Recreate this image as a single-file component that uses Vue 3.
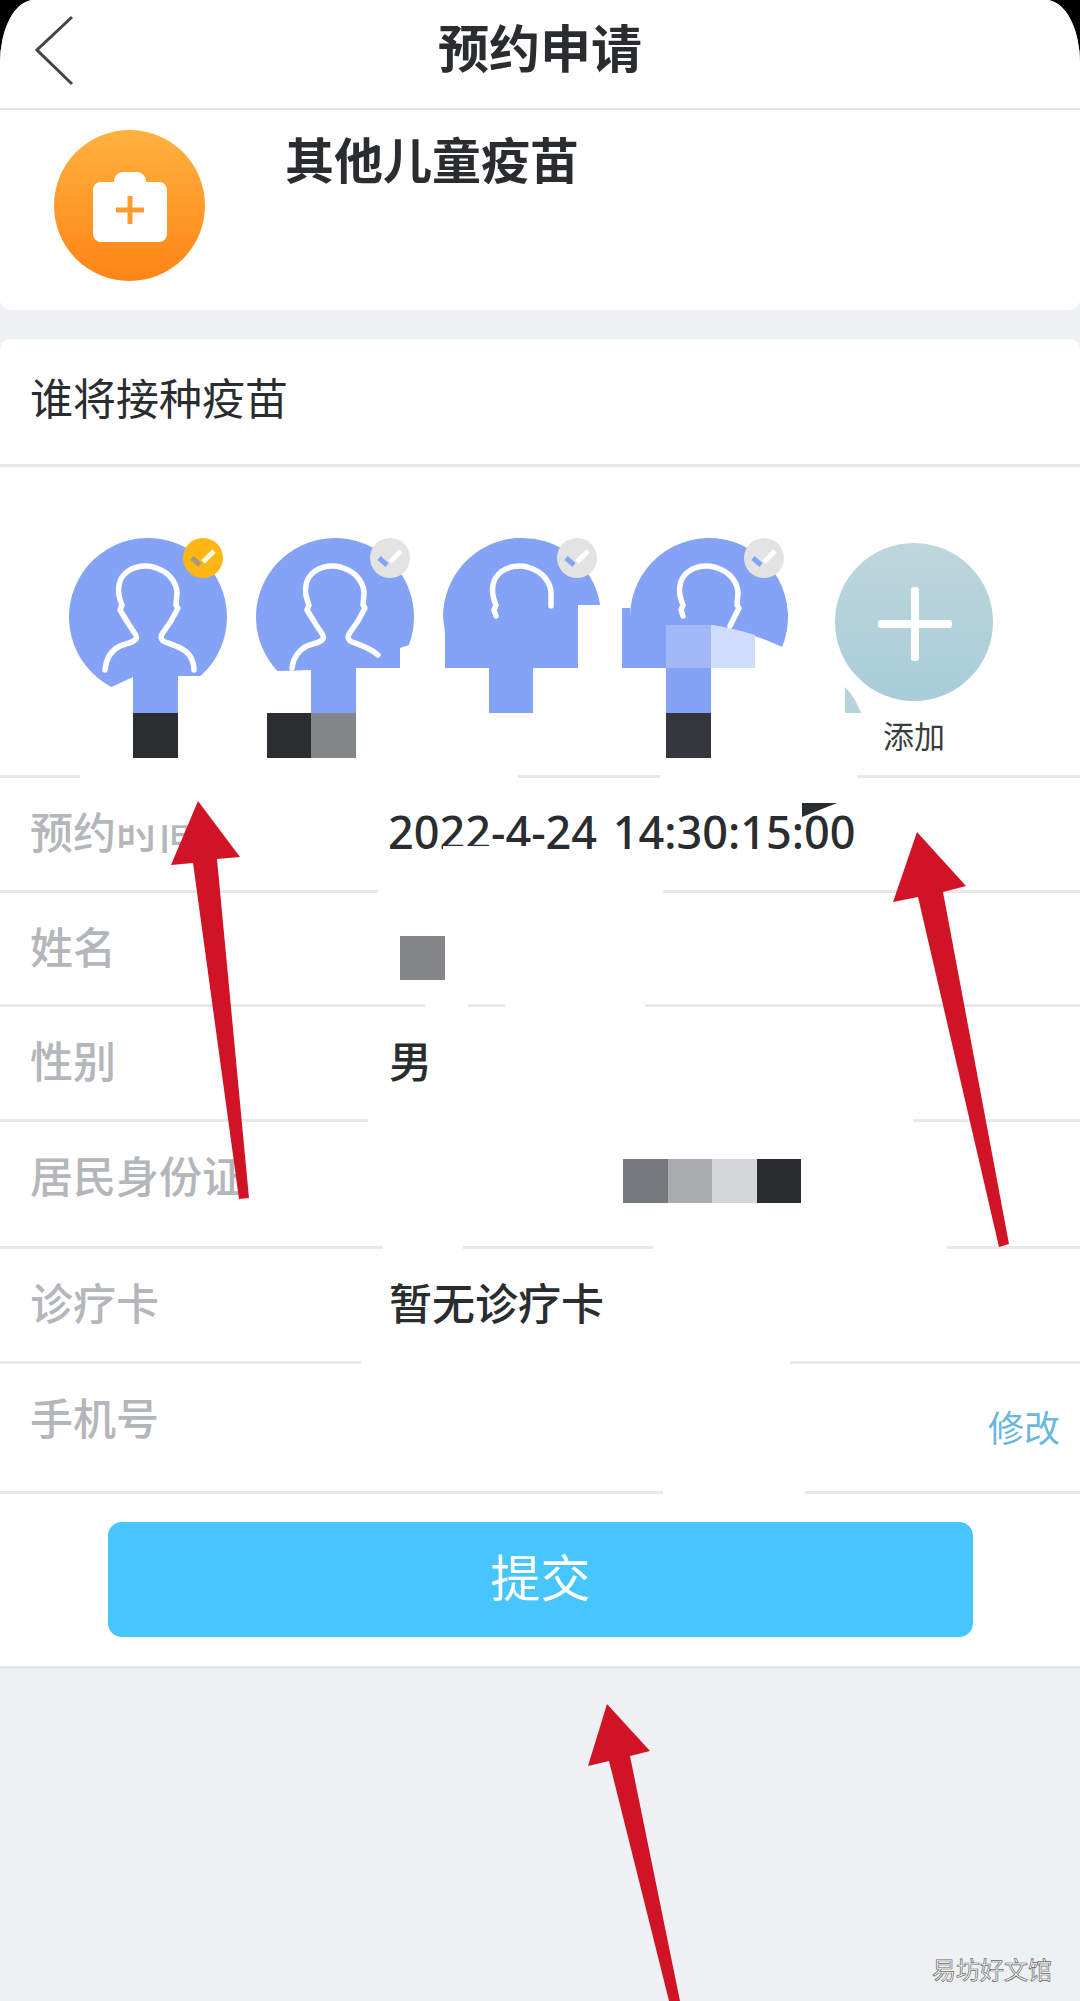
<template>
  <div class="page">
    <header class="top-bar">
      <svg class="back" viewBox="0 0 40 72" width="40" height="72">
        <polyline points="37,2 2,35 37,69" fill="none" stroke="#444" stroke-width="3" />
      </svg>
      <h1 class="title">预约申请</h1>
    </header>

    <section class="vaccine-card">
      <svg class="vaccine-icon" viewBox="0 0 151 151" width="151" height="151">
        <defs>
          <linearGradient id="orange" x1="0" y1="0" x2="0" y2="1">
            <stop offset="0" stop-color="#ffb23f" />
            <stop offset="1" stop-color="#ff8416" />
          </linearGradient>
        </defs>
        <circle cx="75.5" cy="75.5" r="75.5" fill="url(#orange)" />
        <rect x="60" y="42" width="32" height="24" rx="9" fill="#fff" />
        <rect x="39" y="52" width="74" height="60" rx="8" fill="#fff" />
        <rect x="62" y="77.5" width="28" height="5" fill="#ff9a30" />
        <rect x="73.5" y="66" width="5" height="28" fill="#ff9a30" />
      </svg>
      <div class="vaccine-name">其他儿童疫苗</div>
    </section>

    <section class="form-card">
      <div class="form-heading">谁将接种疫苗</div>

      <div class="people">
        <div v-for="(p, i) in people" :key="i" class="person">
          <svg viewBox="0 0 158 220" width="158" height="220">
            <path :d="p.body" fill="#84a2f6" />
            <path :d="p.outline" fill="none" stroke="#fff" stroke-width="5.5" stroke-linecap="round" stroke-linejoin="round" />
            <rect v-for="(b, j) in p.blocks" :key="j" :x="b[0]" :y="b[1]" :width="b[2]" :height="b[3]" :fill="b[4]" />
            <path v-if="p.lightTop" d="M81 87Q103 90 125 97V130H81Z" fill="#d0dcfc" />
            <circle cx="134" cy="20" r="20" :fill="p.active ? '#fdb714' : '#e3e3e3'" />
            <path d="M9 20L17 27" :stroke="p.active ? '#a9987a' : '#84a2f6'" stroke-width="5" fill="none" transform="translate(114 0)" />
            <path d="M20 24L31 13" :stroke="p.active ? '#fff8dc' : '#fff'" stroke-width="5" fill="none" transform="translate(114 0)" />
          </svg>
        </div>

        <div class="person-add">
          <svg viewBox="0 0 158 158" width="158" height="158">
            <defs>
              <linearGradient id="teal" x1="0" y1="0" x2="0" y2="1">
                <stop offset="0" stop-color="#bed6dc" />
                <stop offset="1" stop-color="#a8cdd8" />
              </linearGradient>
            </defs>
            <circle cx="79" cy="79" r="79" fill="url(#teal)" />
            <rect x="43" y="77" width="74" height="8" rx="3" fill="#fff" />
            <rect x="76" y="44" width="8" height="74" rx="3" fill="#fff" />
            <path d="M10 144Q20 154 26 170H10Z" fill="#b5d3da" />
          </svg>
          <span class="add-text">添加</span>
        </div>

        <i v-for="g in peopleGaps" :key="g[0]" class="line-gap" :style="gapStyle(g)"></i>
      </div>

      <div v-for="row in rows" :key="row.label" class="row" :style="{ height: row.height + 'px' }">
        <div class="label">
          {{ row.label }}<span v-if="row.faded" class="label-faded">{{ row.faded }}</span>
        </div>

        <div v-if="row.date" class="value date">
          {{ row.value }}
          <i class="date-nick"></i>
          <i class="date-chip"></i>
        </div>
        <div v-else-if="row.value" class="value">{{ row.value }}</div>

        <div v-if="row.pixels" class="pixels" :class="row.pixelClass">
          <i v-for="c in row.pixels" :key="c" :style="{ background: c }"></i>
        </div>

        <a v-if="row.action" class="row-action">{{ row.action }}</a>
        <i v-for="g in row.gaps" :key="g[0]" class="line-gap" :style="gapStyle(g)"></i>
      </div>

      <div class="submit-wrap">
        <button class="submit">提交</button>
      </div>
    </section>

    <svg class="arrows" viewBox="0 0 1080 2001" width="1080" height="2001">
      <polygon points="198,801 240,857 217,859 249,1198 239,1199 193,863 171,865" fill="#d01426" />
      <polygon points="917,832 966,886 943,892 1009,1244 999,1247 918,897 893,902" fill="#d01426" />
      <polygon points="607,1704 650,1751 630,1756 680,2001 669,2001 609,1761 588,1766" fill="#d01426" />
    </svg>

    <div class="watermark">易坊好文馆</div>
  </div>
</template>

<script setup>
const headPath = 'M53 78L51 72L53 67C50 60 49 52 50 47C52 36 62 28 77 28C84 28 88 30 92 32C101 36 108 46 108 55'
const neckRight = 'L107 67L109 70L102 83L93 96C91 100 93 103 96 104'
const neckLeft = 'C37 120 43 112 51 108C58 105 64 105 67 101C69 98 63 92 59 85L51 72L53 67C50 60 49 52 50 47C52 36 62 28 77 28C84 28 88 30 92 32C101 36 108 46 108 55'

const people = [
  {
    active: true,
    body: 'M42.4 149A79 79 0 1 1 131.5 138L109 138L109 175L64 175L64 139Z',
    outline: 'M36 132' + neckLeft + neckRight + 'C104 107 116 110 121 118C124 123 125 127 125 132',
    blocks: [[64, 175, 45, 45, '#2b2e31']]
  },
  {
    body: 'M21.3 133A79 79 0 1 1 152.9 107L144 110L144 130L100 130L100 175L55 175L55 132Z',
    outline: 'M36 130' + neckLeft + neckRight + 'C104 107 114 110 122 117',
    blocks: [[11, 175, 44, 45, '#2b2e31'], [55, 175, 45, 45, '#84878a']]
  },
  {
    body: 'M0 79A79 79 0 0 1 157.1 67L135 67L135 130L90 130L90 175L46 175L46 130L2 130L2 95Z',
    outline: headPath + 'L108 68',
    blocks: []
  },
  {
    body: 'M152.1 109A79 79 0 1 0 0 79L0 70L-8 70L-8 130L36 130L36 175L81 175L81 87Q115 92 152.1 109Z',
    outline: headPath + 'L107 67L109 70L100 88',
    blocks: [[36, 87, 45, 43, '#a3b8f6'], [36, 175, 45, 45, '#33363a']],
    lightTop: true
  }
]

// 分隔线被涂抹掉的区间 [起点, 终点]
const peopleGaps = [[80, 518], [660, 857]]

const rows = [
  { label: '预约', faded: '时间', value: '2022-4-24 14:30:15:00', date: true, height: 115, gaps: [[378, 663]] },
  { label: '姓名', pixels: ['#84868a'], pixelClass: 'pixels-name', height: 114, gaps: [[425, 468], [505, 645]] },
  { label: '性别', value: '男', height: 115, gaps: [[368, 913]] },
  { label: '居民身份证', pixels: ['#76797d', '#a9abad', '#d4d5d7', '#2a2d30'], pixelClass: 'pixels-id', height: 127, gaps: [[383, 463], [653, 947]] },
  { label: '诊疗卡', value: '暂无诊疗卡', height: 115, gaps: [[361, 790]] },
  { label: '手机号', action: '修改', height: 130, gaps: [[663, 805]] }
]

const gapStyle = (g) => ({ left: g[0] + 'px', width: g[1] - g[0] + 'px' })
</script>

<style scoped>
.page {
  position: relative;
  width: 1080px;
  height: 2001px;
  overflow: hidden;
  background: #eef1f4;
  border-radius: 34px 34px 0 0 / 63px 63px 0 0;
  font-family: "Noto Sans CJK SC", "Noto Sans", sans-serif;
  color: #2a2d30;
}

.top-bar {
  display: grid;
  grid-template-columns: 108px 1fr 108px;
  align-items: center;
  box-sizing: border-box;
  height: 110px;
  background: #fff;
  border-bottom: 2px solid #e4e4e4;
}

.back {
  margin-left: 35px;
  margin-top: -6px;
}

.title {
  grid-column: 2;
  margin: -17px 0 0;
  text-align: center;
  font-size: 51px;
  line-height: 60px;
  font-weight: 700;
}

.vaccine-card {
  display: flex;
  align-items: flex-start;
  gap: 80px;
  box-sizing: border-box;
  height: 200px;
  margin-bottom: 29px;
  padding: 20px 54px 0;
  background: #fff;
  border-radius: 0 0 10px 10px;
}

.vaccine-name {
  margin-top: -2px;
  font-size: 49px;
  line-height: 60px;
  font-weight: 700;
}

.form-card {
  background: #fff;
  border-radius: 10px 10px 0 0;
  border-bottom: 3px solid #e3e5e7;
}

.form-heading {
  box-sizing: border-box;
  height: 128px;
  padding: 27px 30px 0;
  font-size: 43px;
  line-height: 60px;
  border-bottom: 3px solid #e8e8e8;
}

.people {
  position: relative;
  display: flex;
  gap: 29px;
  box-sizing: border-box;
  height: 311px;
  padding: 71px 0 0 69px;
  border-bottom: 3px solid #e8e8e8;
}

.person svg,
.person-add svg {
  display: block;
  overflow: visible;
}

.person-add {
  display: flex;
  flex-direction: column;
  align-items: center;
  margin: 5px 0 0 18px;
}

.add-text {
  margin-top: 14px;
  font-size: 31px;
  line-height: 40px;
  color: #3a3c3f;
}

.row {
  position: relative;
  display: flex;
  box-sizing: border-box;
  padding: 22px 0 0 30px;
  border-bottom: 3px solid #e8e8e8;
}

.label {
  width: 359px;
  flex-shrink: 0;
  font-size: 43px;
  line-height: 60px;
  font-weight: 500;
  color: #b3b6ba;
}

.label-faded {
  display: inline-block;
  clip-path: inset(42% 0 0 0);
}

.value {
  position: relative;
  font-size: 43px;
  line-height: 60px;
  font-weight: 500;
}

.date {
  margin: 2px 0 0 -1px;
  font-family: "Noto Sans", "Noto Sans CJK SC", sans-serif;
  font-size: 45px;
  word-spacing: 4px;
  white-space: nowrap;
}

.date-nick {
  position: absolute;
  left: 55px;
  top: 44px;
  width: 84px;
  height: 4px;
  background: #fff;
}

.date-chip {
  position: absolute;
  left: 414px;
  top: 1px;
  width: 35px;
  height: 14px;
  background: #2a2d30;
  clip-path: polygon(0 0, 100% 0, 0 100%);
}

.pixels {
  display: flex;
}

.pixels i {
  display: block;
  width: 44.5px;
  height: 44px;
}

.pixels-name {
  margin: 21px 0 0 11px;
}

.pixels-id {
  margin: 15px 0 0 234px;
}

.row-action {
  position: absolute;
  right: 20px;
  top: 39px;
  font-size: 36px;
  line-height: 46px;
  color: #6ab8dc;
}

.line-gap {
  position: absolute;
  bottom: -3px;
  height: 3px;
  background: #fff;
}

.submit-wrap {
  padding: 28px 107px 29px 108px;
}

.submit {
  display: block;
  width: 100%;
  height: 115px;
  padding: 0 0 10px;
  border: none;
  border-radius: 14px;
  background: #47c5fd;
  color: #fff;
  font-family: inherit;
  font-size: 50px;
}

.arrows {
  position: absolute;
  left: 0;
  top: 0;
  pointer-events: none;
}

.watermark {
  position: absolute;
  right: 28px;
  top: 1954px;
  font-size: 24px;
  line-height: 30px;
  color: #fff;
  -webkit-text-stroke: 0.7px #666;
}
</style>

<style>
html,
body {
  background: #000;
}
</style>
